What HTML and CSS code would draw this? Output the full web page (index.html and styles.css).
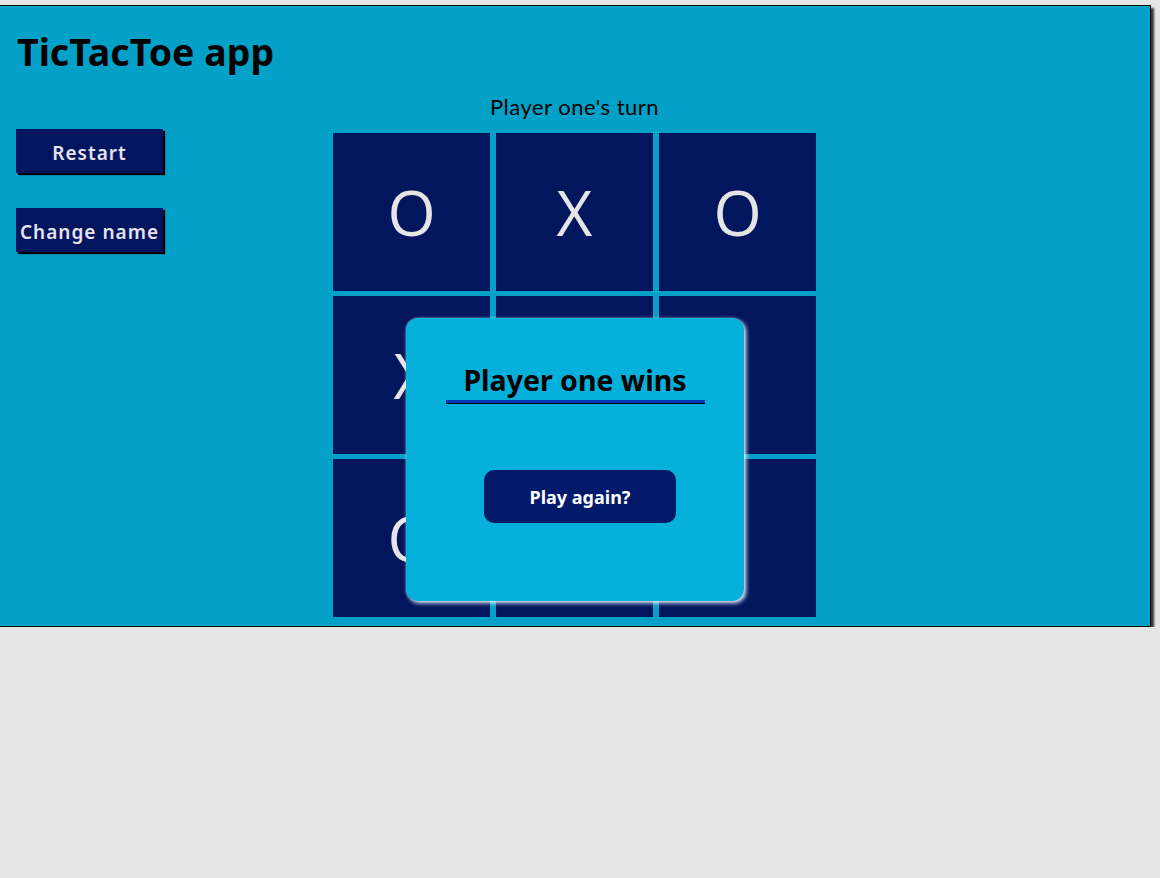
FILE: index.html
```html
<!DOCTYPE html>
<html>
<head>
<meta charset="utf-8">
<link rel="stylesheet" href="styles.css">
</head>
<body>
<div class="app">
  <h1 class="title">TicTacToe app</h1>
  <div class="layout">
    <div class="sidebar">
      <button class="side-btn">Restart</button>
      <button class="side-btn">Change name</button>
    </div>
    <div class="game">
      <p class="turn">Player one's turn</p>
      <div class="board-wrap">
        <div class="board">
          <div class="cell">O</div>
          <div class="cell">X</div>
          <div class="cell">O</div>
          <div class="cell">X</div>
          <div class="cell"></div>
          <div class="cell"></div>
          <div class="cell">O</div>
          <div class="cell"></div>
          <div class="cell"></div>
        </div>
        <div class="modal">
          <h2 class="modal-title">Player one wins</h2>
          <button class="again">Play again?</button>
        </div>
      </div>
    </div>
    <div class="spacer"></div>
  </div>
</div>
</body>
</html>
```
FILE: styles.css
```css
html, body {
  margin: 0;
  padding: 0;
  background: #e5e5e5;
}
body {
  padding-top: 5px;
  font-family: "Noto Sans", "Open Sans", sans-serif;
}
.app {
  width: 1150px;
  height: 620px;
  background: #03a1c7;
  border: 1px solid #000;
  border-left: none;
  box-shadow: 3px 3px 2px #333;
}
.title {
  margin: 0;
  padding: 22px 0 16px 17px;
  font-size: 37.5px;
  line-height: 48px;
  font-weight: 700;
  color: #000;
}
.layout {
  display: grid;
  grid-template-columns: 333px auto 1fr;
}
.sidebar {
  display: flex;
  flex-direction: column;
  align-items: flex-start;
  gap: 35px;
  padding: 37px 0 0 16px;
}
.side-btn {
  width: 147px;
  height: 44px;
  padding: 3px 0 0;
  border: none;
  background: #02155f;
  color: #e8e2ee;
  font-family: "Noto Sans", sans-serif;
  font-size: 19px;
  font-weight: 600;
  letter-spacing: 1px;
  box-shadow: 2px 2px 1px #000;
}
.game {
  display: flex;
  flex-direction: column;
  align-items: center;
}
.turn {
  margin: 0;
  padding-top: 2px;
  font-family: "Lato", "Open Sans", sans-serif;
  font-size: 22px;
  line-height: 26px;
  letter-spacing: 0.5px;
  color: #000;
}
.board-wrap {
  position: relative;
  margin-top: 13px;
}
.board {
  display: grid;
  grid-template-columns: repeat(3, 157px);
  grid-template-rows: repeat(3, 158px);
  column-gap: 6px;
  row-gap: 5px;
}
.cell {
  background: #02165e;
  color: #e5e5e5;
  font-family: "Open Sans", sans-serif;
  font-size: 62px;
  display: flex;
  align-items: center;
  justify-content: center;
}
.modal {
  position: absolute;
  left: 73px;
  top: 185px;
  width: 338px;
  height: 283px;
  box-sizing: border-box;
  border-radius: 12px;
  background: #05b1da;
  box-shadow: 2px 2px 4px #e8f4f8, 0 0 2px rgba(255,255,255,0.5);
  display: flex;
  flex-direction: column;
  align-items: center;
}
.modal-title {
  position: relative;
  margin: 44px 0 0;
  width: 259px;
  text-align: center;
  font-size: 28.5px;
  line-height: 36px;
  font-weight: 700;
  color: #000;
  padding-bottom: 2px;
  border-bottom: 3px solid #0537b9;
}
.modal-title::after {
  content: "";
  position: absolute;
  left: 0;
  right: 0;
  bottom: -4px;
  height: 1px;
  background: #000;
}
.again {
  margin: 67px 0 0 10px;
  width: 192px;
  height: 53px;
  border: none;
  border-radius: 10px;
  background: #021a69;
  color: #fff;
  font-family: "Noto Sans", sans-serif;
  font-size: 18px;
  font-weight: 700;
}
```
